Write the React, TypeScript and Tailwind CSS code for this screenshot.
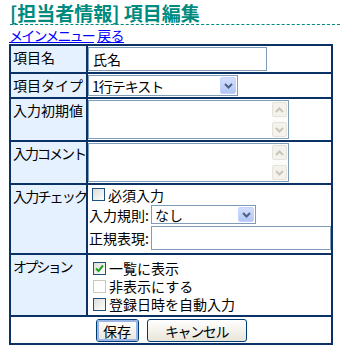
import React from "react";

const FONT = "font-['Noto_Sans_CJK_JP','Noto_Sans_CJK_SC',sans-serif]";

function Chevron({ dir, color }: { dir: "up" | "down"; color: string }) {
  return (
    <svg width="9" height="6" viewBox="0 0 9 6">
      <path
        d={dir === "down" ? "M1 1 L4.5 4.5 L8 1" : "M1 5 L4.5 1.5 L8 5"}
        fill="none"
        stroke={color}
        strokeWidth="2"
      />
    </svg>
  );
}

function Select({ w, h, text, textCls }: { w: number; h: number; text: string; textCls?: string }) {
  return (
    <div
      className="flex items-stretch border border-[#7f9db9] bg-white shrink-0"
      style={{ width: w, height: h }}
    >
      <div className={"flex-1 flex items-center pl-[3px] text-[14px] leading-none text-black whitespace-nowrap " + (textCls || "")}>
        {text}
      </div>
      <div className="w-[16px] m-[1px] flex items-center justify-center rounded-[2px] border border-[#c3d3fd] bg-gradient-to-b from-[#d2defc] to-[#b2c7f7]">
        <Chevron dir="down" color="#4d6185" />
      </div>
    </div>
  );
}

function TextArea() {
  return (
    <div className="w-[201px] h-[39px] border border-[#7f9db9] bg-white flex justify-end">
      <div className="w-[16px] h-full flex flex-col justify-between bg-[#fcfcfa] py-[1px] pr-[1px]">
        <div className="w-[15px] h-[15px] rounded-[2px] border border-[#e6e4da] bg-[#f3f2ed] flex items-center justify-center">
          <Chevron dir="up" color="#c9c6b8" />
        </div>
        <div className="w-[15px] h-[15px] rounded-[2px] border border-[#e6e4da] bg-[#f3f2ed] flex items-center justify-center">
          <Chevron dir="down" color="#c9c6b8" />
        </div>
      </div>
    </div>
  );
}

function Checkbox({ checked, disabled }: { checked?: boolean; disabled?: boolean }) {
  return (
    <div
      className={
        "w-[13px] h-[13px] shrink-0 border flex items-center justify-center " +
        (disabled
          ? "border-[#cac8bb] bg-white"
          : "border-[#1c5180] bg-gradient-to-br from-[#dcdcd7] to-white")
      }
    >
      {checked && (
        <svg width="9" height="9" viewBox="0 0 9 9">
          <path d="M1 4.5 L3.5 7 L8 1.5" fill="none" stroke="#21a121" strokeWidth="2" />
        </svg>
      )}
    </div>
  );
}

function Row({
  label,
  h,
  labelCls,
  children,
}: {
  label: string;
  h: number;
  labelCls?: string;
  children: React.ReactNode;
}) {
  return (
    <div className="flex border-b-2 border-[#0b3264]" style={{ height: h }}>
      <div
        className={
          "w-[77px] shrink-0 bg-[#e5f1fe] border-r-2 border-[#0b3264] pl-[2px] pt-[3px] text-[14px] leading-[16px] whitespace-nowrap overflow-hidden " +
          (labelCls || "")
        }
      >
        {label}
      </div>
      <div className="flex-1 min-w-0">{children}</div>
    </div>
  );
}

function Button({ text, w, focused, textCls }: { text: string; w: number; focused?: boolean; textCls?: string }) {
  return (
    <div
      className="h-[23px] rounded-[3px] border border-[#003c74] bg-gradient-to-b from-white to-[#e8e5d8] flex items-center justify-center text-[14px] leading-none"
      style={{ width: w }}
    >
      <div
        className={
          "w-full h-full rounded-[2px] flex items-center justify-center whitespace-nowrap " +
          (focused ? "border-2 border-[#9bb6e6] " : "") +
          (textCls || "")
        }
      >
        {text}
      </div>
    </div>
  );
}

export default function App() {
  return (
    <div className={"w-[340px] h-[352px] bg-white text-black overflow-hidden " + FONT}>
      <div className="ml-[10px] h-[25px] pt-[2px] border-b border-dashed border-[#008b80] text-[19px] leading-[22px] font-bold text-[#008b80] whitespace-nowrap">
        [担当者情報] 項目編集
      </div>
      <div className="ml-[9px] h-[19px] pt-[3px] text-[14px] leading-[15px] text-[#0000ff] whitespace-nowrap">
        <span className="underline tracking-[-1.8px]">メインメニュー</span>{" "}
        <span className="underline tracking-[-0.5px]">戻る</span>
      </div>
      <div className="ml-[9px] w-[324px] border-2 border-[#0b3264]">
        <Row label="項目名" h={28}>
          <div className="mt-[1px] w-[179px] h-[24px] border border-[#7f9db9] bg-white flex items-center pl-[4px] text-[14px] leading-none">
            氏名
          </div>
        </Row>
        <Row label="項目タイプ" h={25}>
          <div className="mt-[1px]">
            <Select w={150} h={21} text="1行テキスト" textCls="tracking-[-1px]" />
          </div>
        </Row>
        <Row label="入力初期値" h={43}>
          <div className="mt-[1px]">
            <TextArea />
          </div>
        </Row>
        <Row label="入力コメント" h={43} labelCls="tracking-[-2px]">
          <div className="mt-[1px]">
            <TextArea />
          </div>
        </Row>
        <Row label="入力チェック" h={70} labelCls="tracking-[-1.8px]">
          <div className="flex flex-col text-[14px] leading-none whitespace-nowrap">
            <div className="h-[19px] flex items-center pl-[4px] gap-[3px]">
              <Checkbox />
              <span>必須入力</span>
            </div>
            <div className="h-[21px] flex items-center pl-[1px]">
              <span className="w-[62px] shrink-0">入力規則:</span>
              <Select w={105} h={19} text="なし" />
            </div>
            <div className="h-[26px] flex items-center pl-[1px]">
              <span className="w-[62px] shrink-0">正規表現:</span>
              <div className="w-[180px] h-[24px] shrink-0 border border-[#7f9db9] bg-white" />
            </div>
          </div>
        </Row>
        <Row label="オプション" h={62} labelCls="tracking-[-2.4px]">
          <div className="flex flex-col pt-[4px] text-[14px] leading-[14px] whitespace-nowrap">
            <div className="h-[18px] flex items-center pl-[5px] gap-[3px]">
              <Checkbox checked />
              <span>一覧に表示</span>
            </div>
            <div className="h-[18px] flex items-center pl-[5px] gap-[3px]">
              <Checkbox disabled />
              <span>非表示にする</span>
            </div>
            <div className="h-[18px] flex items-center pl-[5px] gap-[3px]">
              <Checkbox />
              <span>登録日時を自動入力</span>
            </div>
          </div>
        </Row>
        <div className="h-[26px] flex items-center justify-center gap-[8px] pt-[1px]">
          <Button text="保存" w={43} focused />
          <Button text="キャンセル" w={100} textCls="tracking-[-1.4px]" />
        </div>
      </div>
    </div>
  );
}
